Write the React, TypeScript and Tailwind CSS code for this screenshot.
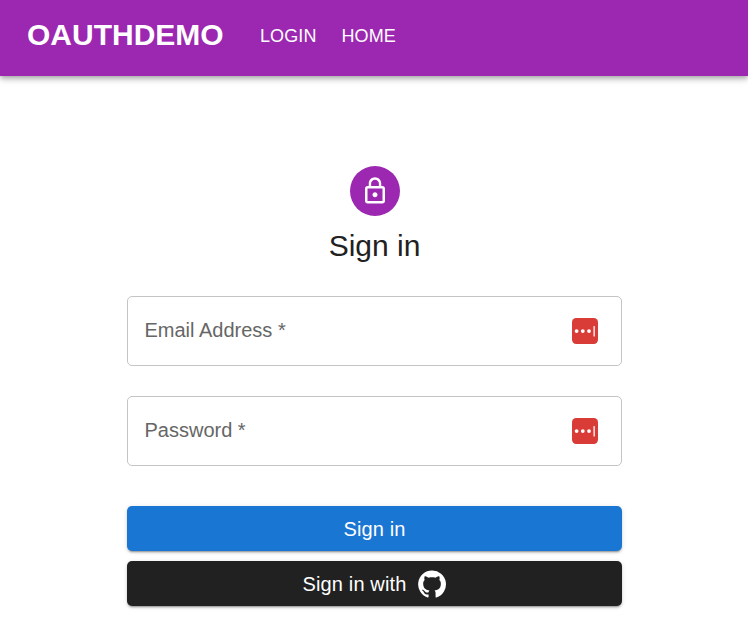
function LockIcon() {
  return (
    <svg viewBox="0 0 24 24" className="size-[30px]" fill="currentColor">
      <path d="M12 17c1.1 0 2-.9 2-2s-.9-2-2-2-2 .9-2 2 .9 2 2 2zm6-9h-1V6c0-2.76-2.24-5-5-5S7 3.24 7 6v2H6c-1.1 0-2 .9-2 2v10c0 1.1.9 2 2 2h12c1.1 0 2-.9 2-2V10c0-1.1-.9-2-2-2zM8.900 6c0-1.710 1.390-3.100 3.100-3.100s3.100 1.390 3.100 3.100v2H8.900V6zM18 20H6V10h12v10z" />
    </svg>
  );
}

function GitHubIcon() {
  return (
    <svg viewBox="0 0 24 24" className="size-[30px]" fill="currentColor">
      <path d="M12 1.27a11 11 0 00-3.48 21.46c.55.09.73-.28.73-.55v-1.84c-3.03.64-3.67-1.46-3.67-1.46-.55-1.29-1.28-1.65-1.28-1.65-.92-.65.1-.65.1-.65 1.1 0 1.73 1.1 1.73 1.1.92 1.65 2.57 1.2 3.21.92a2 2 0 01.64-1.47c-2.47-.27-5.04-1.19-5.04-5.5 0-1.1.46-2.1 1.2-2.84a3.76 3.76 0 010-2.93s.91-.28 3.11 1.1c1.8-.49 3.7-.49 5.5 0 2.1-1.38 3.02-1.1 3.02-1.1a3.76 3.76 0 01.1 2.93c.83.74 1.2 1.74 1.2 2.94 0 4.21-2.57 5.13-5.04 5.4.45.37.82.92.82 2.02v3.03c0 .27.1.64.73.55A11 11 0 0012 1.27" />
    </svg>
  );
}

function PasswordManagerIcon() {
  return (
    <svg viewBox="0 0 26 26" className="size-[26px]">
      <rect width="26" height="26" rx="4.200" fill="#d93b37" />
      <circle cx="4.600" cy="13.100" r="1.900" fill="#fff" />
      <circle cx="10.800" cy="13.100" r="1.900" fill="#fff" />
      <circle cx="17" cy="13.100" r="1.900" fill="#fff" />
      <rect x="21.500" y="8" width="1.300" height="10.500" rx=".6" fill="#fff" />
    </svg>
  );
}

function Field({ label }: { label: string }) {
  return (
    <div className="flex h-[70px] items-center justify-between rounded-[5px] border border-[#c4c4c4] pl-[16.5px] pr-[23.5px]">
      <span className="-mt-0.5 text-[20px] leading-7 text-[#666666]">{label}</span>
      <PasswordManagerIcon />
    </div>
  );
}

const buttonShadow =
  "shadow-[0_3px_1px_-2px_rgba(0,0,0,0.2),0_2px_2px_0_rgba(0,0,0,0.14),0_1px_5px_0_rgba(0,0,0,0.12)]";

export default function App() {
  return (
    <div className="h-[635px] overflow-hidden bg-white font-['Liberation_Sans',Arial,sans-serif]">
      <header className="flex h-[76px] items-center bg-[#9c27b0] pb-[5px] pl-[27px] text-white shadow-[0_2px_4px_-1px_rgba(0,0,0,0.2),0_4px_5px_0_rgba(0,0,0,0.14),0_1px_10px_0_rgba(0,0,0,0.12)]">
        <h1 className="w-[233px] pb-px text-[30px] font-bold leading-9">OAUTHDEMO</h1>
        <nav className="flex gap-[25px] text-[18px] leading-6 tracking-[0.1px]">
          <a>LOGIN</a>
          <a>HOME</a>
        </nav>
      </header>
      <main className="ml-[127px] flex w-[495px] flex-col pt-[90px]">
        <div className="flex size-[50px] items-center justify-center self-center rounded-full bg-[#9c27b0] text-white">
          <LockIcon />
        </div>
        <h2 className="mt-[10px] text-center text-[30px] leading-10 text-[#212121]">Sign in</h2>
        <form className="mt-[30px] flex flex-col">
          <div className="flex flex-col gap-[30px]">
            <Field label="Email Address *" />
            <Field label="Password *" />
          </div>
          <button type="button" className={`mt-10 h-[45px] rounded-[5px] bg-[#1976d2] text-[20px] tracking-[0.15px] text-white ${buttonShadow}`}>
            Sign in
          </button>
          <button type="button" className={`mt-[10px] flex h-[45px] items-center justify-center gap-[10px] rounded-[5px] bg-[#212121] text-[20px] tracking-[0.15px] text-white ${buttonShadow}`}>
            <span>Sign in with</span>
            <GitHubIcon />
          </button>
        </form>
      </main>
    </div>
  );
}
